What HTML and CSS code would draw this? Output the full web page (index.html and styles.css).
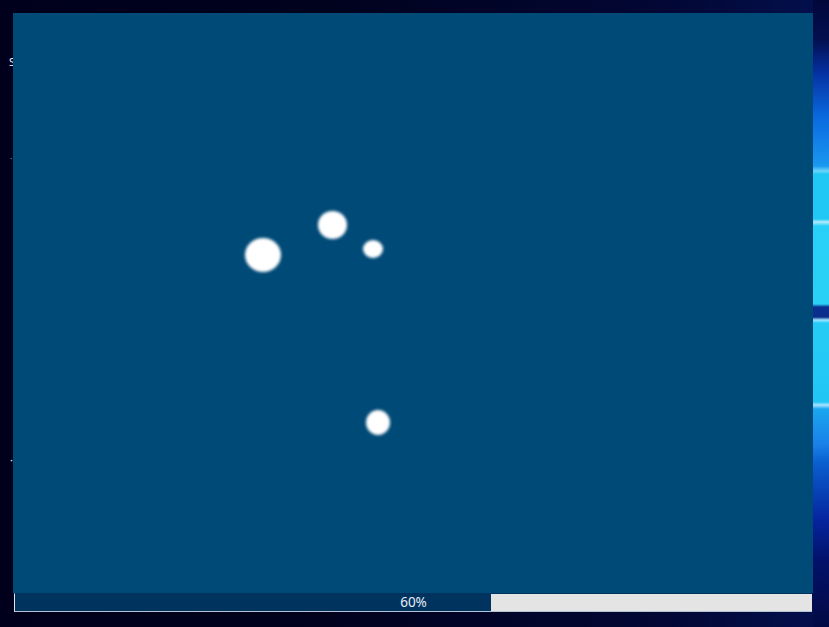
FILE: index.html
```html
<!DOCTYPE html>
<html lang="en">
<head>
<meta charset="utf-8">
<title>Loading</title>
<link rel="stylesheet" href="styles.css">
</head>
<body>
<div class="desktop">
  <div class="icon-labels">
    <span class="label label-1">S</span>
    <span class="label label-2">·</span>
    <span class="label label-3">·</span>
  </div>
  <div class="window">
    <div class="canvas">
      <span class="dot dot-a"></span>
      <span class="dot dot-b"></span>
      <span class="dot dot-c"></span>
      <span class="dot dot-d"></span>
    </div>
    <div class="progress">
      <div class="progress-fill" style="width:59.75%"></div>
      <span class="progress-text">60%</span>
    </div>
  </div>
</div>
</body>
</html>
```
FILE: styles.css
```css
html, body {
  margin: 0;
  padding: 0;
  width: 829px;
  height: 627px;
  overflow: hidden;
}

body {
  font-family: "Noto Sans", "Open Sans", sans-serif;
}

.desktop {
  position: relative;
  width: 829px;
  height: 627px;
  padding: 13px 0 0 13px;
  box-sizing: border-box;
  background:
    linear-gradient(to bottom,
      #02063a 0px,
      #031050 40px,
      #0530a0 72px,
      #0a6ae0 118px,
      #1a98f0 166px,
      #6cd6fa 171px,
      #22c8f5 174px,
      #22c8f5 219px,
      #b0ecff 222px,
      #28d0f8 226px,
      #2ad0f5 304px,
      #0a3090 307px,
      #0a2e8a 317px,
      #9ee4ff 320px,
      #26ccf5 323px,
      #22c6f5 402px,
      #a8e4ff 405px,
      #1aa6f0 409px,
      #1a80e8 445px,
      #0a60d0 462px,
      #05259e 520px,
      #03126a 560px,
      #020a44 627px) right top / 16px 100% no-repeat,
    linear-gradient(to right, #00001c 0%, #01021e 40%, #020734 80%, #03104e 100%);
}

.icon-labels {
  position: absolute;
  left: 0;
  top: 0;
  width: 13px;
  height: 627px;
}

.label {
  position: absolute;
  left: 9px;
  color: #f0f4ff;
  font-size: 11px;
  line-height: 12px;
}

.label-1 { top: 56px; }
.label-2 { top: 153px; left: 10px; font-size: 9px; color: #8090b0; }
.label-3 { top: 454px; left: 10px; }

.window {
  position: relative;
  width: 800px;
  display: flex;
  flex-direction: column;
}

.canvas {
  position: relative;
  height: 580px;
  background: #004a77;
  overflow: hidden;
}

.dot {
  position: absolute;
  background: #ffffff;
  border-radius: 50%;
  filter: blur(1.4px);
}

.dot-a { left: 232px; top: 225px; width: 36px; height: 34px; }
.dot-b { left: 305px; top: 198px; width: 29px; height: 28px; }
.dot-c { left: 350px; top: 227px; width: 20px; height: 18px; }
.dot-d { left: 353px; top: 397px; width: 24px; height: 25px; }

.progress {
  position: relative;
  height: 17px;
  margin: 0 1px 0 1px;
  display: flex;
  background: #e4e4e4;
  border-top: 1px solid #003360;
  border-left: 1px solid #dce6f0;
  border-bottom: 1px solid #b4c4d4;
}

.progress-fill {
  height: 100%;
  background: #00345f;
}

.progress-text {
  position: absolute;
  left: 0;
  right: 0;
  top: 0;
  bottom: 0;
  display: flex;
  align-items: center;
  justify-content: center;
  color: #e6eef6;
  font-size: 13.5px;
  line-height: 1;
}
```
